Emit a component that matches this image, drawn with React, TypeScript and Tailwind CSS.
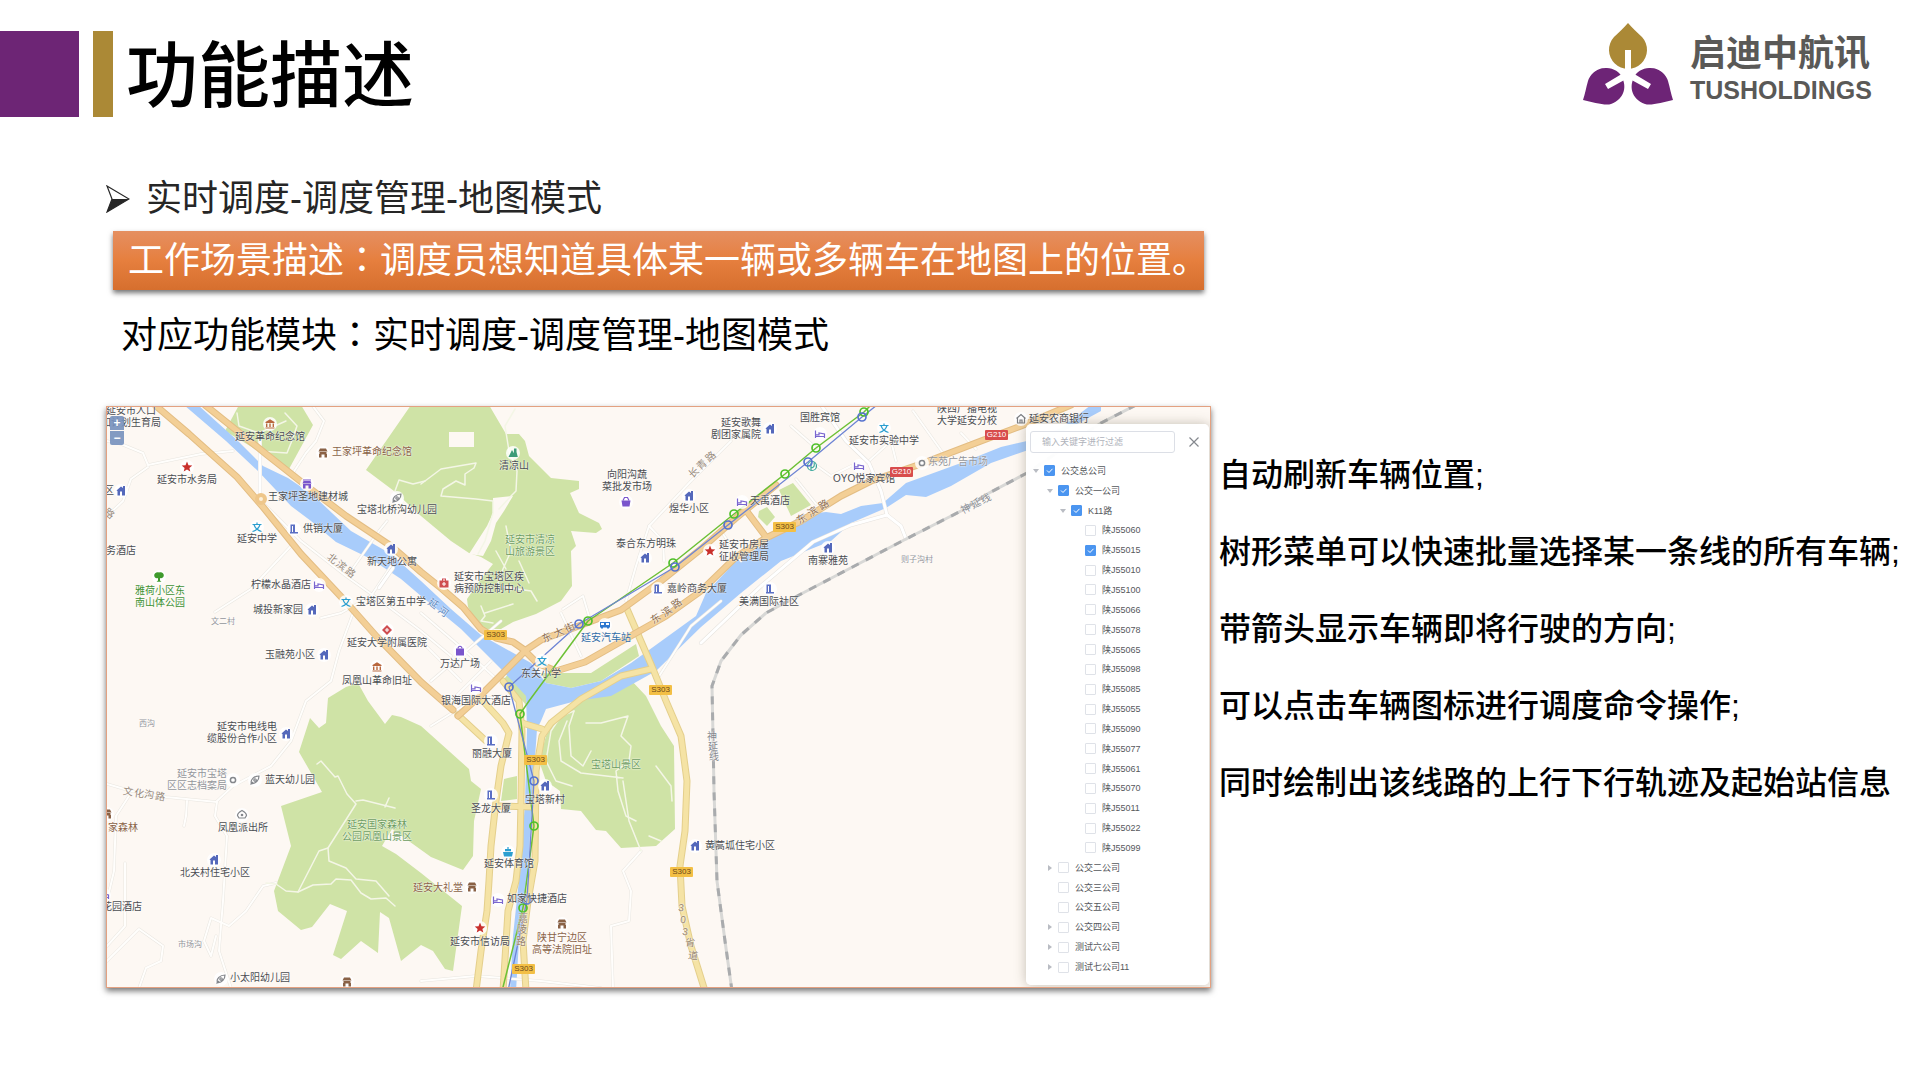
import React from "react";

type IconKind =
  | "house" | "building" | "bed" | "school" | "museum" | "hall" | "star" | "shop" | "rocket"
  | "tree" | "cross" | "mountain" | "medkit" | "bag" | "bus" | "basket" | "bank" | "dot"
  | "swirl" | "police" | "gym";

type Tone = "dark" | "brown" | "green" | "park" | "gray" | "blue";

type Label = { x: number; y: number; lines: string[]; tone?: Tone; small?: boolean; align?: "center" | "right" };

const ORIGIN_X = 106;
const ORIGIN_Y = 406;

const toneClass: Record<Tone, string> = {
  dark: "text-[#4a4c50]",
  brown: "text-[#8a6246]",
  green: "text-[#3f9133]",
  park: "text-[#6c9c5e]",
  gray: "text-[#93959a]",
  blue: "text-[#2e6ba6]",
};

/* x is the left edge of the label, y the middle of its first line */
const labels: Label[] = [
  { x: 100, y: 410, lines: ["延安市人口", "和计划生育局"], align: "center" },
  { x: 234, y: 436, lines: ["延安革命纪念馆"] },
  { x: 331, y: 451, lines: ["王家坪革命纪念馆"], tone: "brown" },
  { x: 156, y: 479, lines: ["延安市水务局"] },
  { x: 103, y: 490, lines: ["区"] },
  { x: 267, y: 496, lines: ["王家坪圣地建材城"] },
  { x: 356, y: 509, lines: ["宝塔北桥沟幼儿园"] },
  { x: 302, y: 528, lines: ["供销大厦"] },
  { x: 236, y: 538, lines: ["延安中学"] },
  { x: 105, y: 550, lines: ["务酒店"] },
  { x: 366, y: 561, lines: ["新天地公寓"] },
  { x: 134, y: 590, lines: ["雅荷小区东", "南山体公园"], tone: "green" },
  { x: 250, y: 584, lines: ["柠檬水晶酒店"] },
  { x: 355, y: 601, lines: ["宝塔区第五中学"] },
  { x: 252, y: 609, lines: ["城投新家园"] },
  { x: 210, y: 621, lines: ["文二村"], tone: "gray", small: true },
  { x: 346, y: 642, lines: ["延安大学附属医院"] },
  { x: 264, y: 654, lines: ["玉融苑小区"] },
  { x: 341, y: 680, lines: ["凤凰山革命旧址"] },
  { x: 498, y: 465, lines: ["清凉山"] },
  { x: 504, y: 539, lines: ["延安市清凉", "山旅游景区"], tone: "park" },
  { x: 453, y: 576, lines: ["延安市宝塔区疾", "病预防控制中心"] },
  { x: 439, y: 663, lines: ["万达广场"] },
  { x: 580, y: 637, lines: ["延安汽车站"], tone: "blue" },
  { x: 520, y: 673, lines: ["东关小学"] },
  { x: 440, y: 700, lines: ["银海国际大酒店"] },
  { x: 601, y: 474, lines: ["向阳沟蔬", "菜批发市场"], align: "center" },
  { x: 668, y: 508, lines: ["煜华小区"] },
  { x: 615, y: 543, lines: ["泰合东方明珠"] },
  { x: 718, y: 544, lines: ["延安市房屋", "征收管理局"] },
  { x: 666, y: 588, lines: ["嘉岭商务大厦"] },
  { x: 710, y: 422, lines: ["延安歌舞", "剧团家属院"], align: "right" },
  { x: 799, y: 417, lines: ["国胜宾馆"] },
  { x: 848, y: 440, lines: ["延安市实验中学"] },
  { x: 936, y: 408, lines: ["陕西广播电视", "大学延安分校"] },
  { x: 1028, y: 418, lines: ["延安农商银行"] },
  { x: 832, y: 478, lines: ["OYO悦家宾馆"] },
  { x: 927, y: 461, lines: ["东苑广告市场"], tone: "gray" },
  { x: 749, y: 500, lines: ["天禹酒店"] },
  { x: 807, y: 560, lines: ["南寨雅苑"] },
  { x: 900, y: 559, lines: ["则子沟村"], tone: "gray", small: true },
  { x: 738, y: 601, lines: ["美满国际社区"] },
  { x: 138, y: 723, lines: ["西沟"], tone: "gray", small: true },
  { x: 206, y: 726, lines: ["延安市电线电", "缆股份合作小区"], align: "right" },
  { x: 166, y: 773, lines: ["延安市宝塔", "区区志档案局"], tone: "gray", align: "right" },
  { x: 264, y: 779, lines: ["蓝天幼儿园"] },
  { x: 107, y: 827, lines: ["家森林"], tone: "brown" },
  { x: 217, y: 827, lines: ["凤凰派出所"] },
  { x: 179, y: 872, lines: ["北关村住宅小区"] },
  { x: 101, y: 906, lines: ["花园酒店"] },
  { x: 177, y: 944, lines: ["市场沟"], tone: "gray", small: true },
  { x: 229, y: 977, lines: ["小太阳幼儿园"] },
  { x: 341, y: 824, lines: ["延安国家森林", "公园凤凰山景区"], tone: "park", align: "center" },
  { x: 412, y: 887, lines: ["延安大礼堂"], tone: "brown" },
  { x: 471, y: 753, lines: ["丽融大厦"] },
  { x: 470, y: 808, lines: ["圣龙大厦"] },
  { x: 524, y: 799, lines: ["宝塔新村"] },
  { x: 590, y: 764, lines: ["宝塔山景区"], tone: "park" },
  { x: 483, y: 863, lines: ["延安体育馆"] },
  { x: 506, y: 898, lines: ["如家快捷酒店"] },
  { x: 449, y: 941, lines: ["延安市信访局"] },
  { x: 531, y: 937, lines: ["陕甘宁边区", "高等法院旧址"], tone: "brown", align: "center" },
  { x: 704, y: 845, lines: ["黄蒿坬住宅小区"] },
];

type RoadName = { chars: [string, number, number][]; angle: number; color: string };

const roadNames: RoadName[] = [
  { angle: 38, color: "#97897a", chars: [["北", 331, 558], ["滨", 340, 565], ["路", 349, 572]] },
  { angle: 36, color: "#5a86bd", chars: [["延", 432, 603], ["河", 442, 611]] },
  { angle: -25, color: "#8b6b4d", chars: [["东", 546, 637], ["大", 558, 632], ["街", 569, 627]] },
  { angle: -35, color: "#8b6b4d", chars: [["东", 655, 618], ["滨", 666, 611], ["路", 676, 603]] },
  { angle: -42, color: "#97897a", chars: [["长", 693, 472], ["青", 701, 464], ["路", 710, 456]] },
  { angle: -32, color: "#8b6b4d", chars: [["东", 801, 518], ["滨", 812, 511], ["路", 823, 504]] },
  { angle: -28, color: "#85888d", chars: [["神", 965, 508], ["延", 975, 503], ["线", 985, 498]] },
  { angle: 8, color: "#97897a", chars: [["文", 127, 791], ["化", 138, 793], ["沟", 148, 794], ["路", 159, 796]] },
  { angle: 0, color: "#97836a", chars: [["嘉", 522, 918], ["陵", 521, 929], ["路", 520, 941]] },
  { angle: 6, color: "#97836a", chars: [["3", 680, 907], ["0", 682, 919], ["3", 684, 931], ["省", 689, 942], ["道", 692, 955]] },
  { angle: 0, color: "#85888d", chars: [["神", 711, 736], ["延", 712, 746], ["线", 713, 756]] },
  { angle: 40, color: "#97897a", chars: [["路", 108, 513]] },
];

const badges: [string, number, number][] = [
  ["S303", 494, 634], ["S303", 659, 689], ["S303", 783, 526], ["S303", 534, 759],
  ["S303", 522, 968], ["S303", 680, 871], ["G210", 995, 434], ["G210", 900, 471],
];

const icons: [IconKind, number, number, string][] = [
  ["museum", 269, 423, "#b9683f"], ["hall", 322, 452, "#8a6246"], ["star", 186, 466, "#c9302c"],
  ["house", 120, 490, "#5468bb"], ["shop", 306, 483, "#7a55cc"], ["rocket", 396, 497, "#84878c"],
  ["building", 293, 528, "#5b6fc4"], ["school", 256, 526, "#2c9fd0"], ["house", 390, 548, "#5468bb"],
  ["tree", 158, 576, "#3f9a2c"], ["bed", 318, 584, "#7a66cf"], ["school", 345, 601, "#2c9fd0"],
  ["house", 311, 609, "#5468bb"], ["cross", 386, 629, "#cf4d50"], ["house", 323, 654, "#5468bb"],
  ["museum", 376, 666, "#b9683f"], ["mountain", 512, 452, "#3d9c78"], ["medkit", 443, 582, "#cf4d50"],
  ["bag", 459, 650, "#7a55cc"], ["bus", 604, 624, "#2f78cf"], ["school", 541, 660, "#2c9fd0"],
  ["bed", 475, 687, "#7a66cf"], ["basket", 625, 501, "#7a55cc"], ["house", 688, 495, "#5468bb"],
  ["house", 644, 557, "#5468bb"], ["star", 709, 550, "#c9302c"], ["building", 657, 588, "#5b6fc4"],
  ["house", 769, 428, "#5468bb"], ["bed", 819, 433, "#7a66cf"], ["school", 883, 427, "#2c9fd0"],
  ["bank", 1020, 418, "#7c7e82"], ["bed", 858, 465, "#7a66cf"], ["dot", 921, 462, "#84878c"],
  ["bed", 741, 501, "#7a66cf"], ["house", 827, 547, "#5468bb"],
  ["building", 769, 588, "#5b6fc4"], ["house", 285, 733, "#5468bb"], ["dot", 232, 779, "#84878c"],
  ["rocket", 254, 779, "#84878c"], ["hall", 106, 813, "#8a6246"], ["police", 241, 814, "#84878c"],
  ["house", 213, 859, "#5468bb"], ["bed", 103, 894, "#7a66cf"], ["rocket", 220, 978, "#84878c"],
  ["hall", 346, 981, "#8a6246"], ["hall", 471, 886, "#8a6246"], ["building", 490, 740, "#5b6fc4"],
  ["building", 490, 794, "#5b6fc4"], ["house", 544, 785, "#5468bb"], ["gym", 507, 851, "#2c9fd0"],
  ["bed", 497, 899, "#7a66cf"], ["star", 479, 927, "#c9302c"], ["hall", 561, 923, "#8a6246"],
  ["house", 694, 845, "#5468bb"],
];

function iconShape(kind: IconKind, c: string) {
  const line = { fill: "none", stroke: c, strokeWidth: 1.2 };
  switch (kind) {
    case "house":
      return <path d="M-4.500-.5 0-4.500 2-3V-5H4V4.500H1V.500H-1V4.500H-3.500V0Z" fill={c} />;
    case "building":
      return <path d="M-3.500-4.500H1V3H4V4.500H-4V3H-3.500ZM-2-3V3H-1V-3Z" fill={c} fillRule="evenodd" />;
    case "bed":
      return <path d="M-4.500-3.500V4M-4.500 2.500H4.500M4.500 4V0L-1-1V.800H-4.500" {...line} />;
    case "school":
      return <path d="M-4.500-2.500H4.500M0-4.500V-2.500M-3-2.500C-2 1 1 3.500 4.500 4.500M3-2.500C2 1-1 3.500-4.500 4.500" {...line} />;
    case "museum":
      return <path d="M0-4.800 4.500-2V-1H-4.500V-2ZM-4-.5H-2.600V3H-4ZM-.7-.5H.700V3H-.7ZM2.600-.5H4V3H2.600ZM-4.500 3.400H4.500V4.600H-4.500Z" fill={c} />;
    case "hall":
      return <path d="M-3-4.500H3L4.500-1.500H-4.500ZM-3.500-1H3.500V1H4V4.500H1.500V1.500H-1.500V4.500H-4V1H-3.500Z" fill={c} />;
    case "star":
      return <path d="M0-5.500 1.500-1.800 5.300-1.600 2.400.900 3.300 4.600 0 2.600-3.300 4.600-2.400.900-5.300-1.600-1.500-1.800Z" fill={c} />;
    case "shop":
      return <path d="M-4-4.500H4V-3.500H-4ZM-3.500-3H3.500L4.500-.5H-4.500ZM-4 0H4V4.500H1.500V1.500H-1.500V4.500H-4Z" fill={c} />;
    case "rocket":
      return <path d="M-3.500 3.500C-5 0-1-4 4-4 4 0 1 4-3.500 3.500ZM0-1.200A1.200 1.200 0 1 0 .1-1.200M-4.500 4.500-2 2" {...line} />;
    case "tree":
      return <path d="M-4.800-1.500C-5-4-2-5.500 0-4.500 2.500-5.500 5-4 4.800-1.500 4.500 1 2.500 1.500 1 1V3.500L2.500 4.800H-2.500L-1 3.500V1C-3 1.500-4.500 1-4.800-1.500Z" fill={c} />;
    case "cross":
      return <><path d="M0-5 5 0 0 5-5 0Z" fill={c} /><path d="M0-2V2M-2 0H2" stroke="#fff" strokeWidth="1.100" /></>;
    case "mountain":
      return <path d="M-4.500 4-1-3 .8.200 1-4.500H3.500V-1L4.800 4Z" fill={c} />;
    case "medkit":
      return <><path d="M-4.500-2.500H-2V-4.500H2V-2.500H4.500V4.500H-4.500ZM-1-2.500H1V-3.500H-1Z" fill={c} fillRule="evenodd" /><path d="M0-1V3M-2 1H2" stroke="#fff" strokeWidth="1.100" /></>;
    case "bag":
      return <><path d="M-4-2.500H4V4.500H-4Z" fill={c} /><path d="M-2-2.500C-2-5.500 2-5.500 2-2.500" {...line} /></>;
    case "bus":
      return <path d="M-5-3H5V2.500H4V3.500H2V2.500H-2V3.500H-4V2.500H-5ZM-4-2V0H-1V-2ZM1-2V0H4V-2Z" fill={c} fillRule="evenodd" />;
    case "basket":
      return <><path d="M-4.500-1.500H4.500L3.500 4.500H-3.500Z" fill={c} /><path d="M-3-1.500-1.500-4.500H1.500L3-1.500" {...line} /></>;
    case "bank":
      return <path d="M-4.500-.5 0-4.500 4.500-.5M-3.500-1V4H3.500V-1M-1 4V1H1V4" {...line} />;
    case "dot":
      return <circle r="2.600" fill="#fff" stroke={c} strokeWidth="1.500" />;
    case "swirl":
      return <><circle r="4.500" {...line} /><path d="M-1 4.500V-3M-1 2C2 2 3-1 2-3.500" {...line} /></>;
    case "police":
      return <><path d="M-4.500.5C-4.500-2 0-4.500 0-4.500S4.500-2 4.500.500L3 3H-3Z" {...line} /><circle r="1.300" fill={c} /></>;
    case "gym":
      return <path d="M-5 0H5L4 4.500H-4ZM-3-3H3V-.8H-3ZM-.6-5H.600V-3H-.6Z" fill={c} />;
  }
}

const minorRoads = [
  "M106 440 120 443 142 452 147 464 200 453 232 450",
  "M147 466 130 478 122 500 106 515",
  "M262 502 300 540 345 575 380 600 420 630 450 655",
  "M214 611 250 588 290 545",
  "M390 565 370 595 340 612 320 617",
  "M352 612 338 650 330 680 305 700 290 740 270 765 232 785 216 800",
  "M106 783 130 790 165 796 216 801 214 815 226 835 222 900 218 950 230 987",
  "M186 800 185 815 183 825",
  "M128 795 115 815 113 870 106 900",
  "M124 862V925L106 945",
  "M106 960 138 928 162 945 160 960 145 967 138 987",
  "M311 404 323 420 315 440 305 452 290 475",
  "M386 520 378 530 350 570",
  "M730 440 690 480 648 525 635 565 625 600",
  "M648 525 662 540 663 560",
  "M420 640 460 680M430 680 500 620M450 700 490 660M420 612 470 655 500 682",
  "M560 612 580 655M562 608 582 595 590 622",
  "M430 725 470 700 500 695",
  "M420 980 475 975 540 980 600 987",
  "M612 987 610 925 628 920 630 890 622 870 640 850",
  "M795 478 815 503M812 462 830 475 850 465",
  "M912 410 944 455M960 432 975 448",
  "M815 447 790 425M868 460 890 440 895 460",
  "M655 680 690 625 720 600",
  "M735 520 720 530 740 560",
  "M275 882 262 885 245 910 228 925 210 917 203 940 210 955 215 935",
];

const broadRoads = [
  "M820 404 845 440 868 462 880 490 886 514",
  "M259 440V492",
  "M392 567 378 587",
  "M886 514 850 524 812 541 760 585 700 642",
  "M886 514 900 525 905 538",
];

const parkPaths = [
  "M236 412 238 425 258 432 257 450 286 452 290 442 296 425 284 412M258 432 285 420",
  "M514 408 504 425 508 450 516 470 515 490 510 495 498 508",
  "M420 483 440 468 475 462 473 467 464 473V484L455 480 442 488 440 495 475 498 492 500 492 512 484 540 477 553",
  "M505 525 510 550 502 568 496 585 530 590 536 600M495 550 505 568M518 560 528 582",
  "M480 605 484 615 480 620 492 622M484 612 512 603",
  "M394 490 398 479 412 483 424 480",
  "M316 763 320 760 334 776 337 775 346 793 355 803 327 847 318 850 297 891 285 890 275 883 265 882M355 800 362 799 394 807M384 806 388 797",
  "M297 891 312 884 330 883 335 878 350 879 360 892 370 898 385 897 394 905M327 847 328 860 345 867 355 878 375 880 388 895",
  "M573 710 560 715 550 730 545 760 555 780 571 785M566 720 558 740 560 760 580 772 622 777M585 722 600 722 627 715 620 735 630 745 628 760 615 770 617 790 625 815 635 820",
  "M573 710 568 725 570 755 582 765 590 750M655 765 670 785 671 800M648 835 660 840",
  "M622 780 628 820 640 850",
];

const orangeRoads = [
  "M154 404 188 433 236 476 262 506 300 553 345 601 376 636 420 681 452 709",
  "M204 404 265 453 303 483 345 515 390 545 420 571 440 587 462 606 480 628 495 637 512 641 525 650",
  "M457 715 478 696 525 649 540 639 575 626 620 609 660 580 700 548 735 517 775 484",
  "M525 651 536 662 555 670 584 661 635 632 665 615 700 590 735 556 765 537 800 520 840 495 870 480 920 463 980 440 1020 425 1070 404",
  "M744 508 765 536",
];

const yellowRoads = [
  "M626 608 652 668 665 700 680 735 686 780 684 830 679 865 681 905 690 945 704 990",
  "M650 668 620 675 580 698 550 722 541 735 535 770 534 860 527 900 522 940 525 990",
  "M502 680 518 700 521 730 520 800 519 845 515 880 507 910 502 990",
  "M482 700 502 722 508 732 500 765 495 800 490 845 488 880 486 910 480 950 475 990",
  "M457 714 485 740",
  "M521 722 541 728",
  "M496 805 532 806",
];

const railway =
  "M1135 404 1100 422 1026 472 988 492 960 510 905 538 800 593 765 612 740 634 720 660 711 685 712 735 713 790 716 880 724 940 731 990";

const upTrack: [number, number][] = [[863, 411], [815, 447], [784, 473], [733, 513], [672, 562], [587, 620], [519, 713], [533, 825], [522, 907]];
const downTrack: [number, number][] = [[861, 416], [807, 461], [727, 524], [674, 566], [578, 623], [508, 686], [533, 780], [526, 899]];

function MapCanvas() {
  return (
    <svg className="absolute inset-0 h-full w-full" role="img" aria-label="延安市地图">
      <g transform="translate(-106 -406)">
        <g fill="#cfe3a6">
          <path d="M238 404 224 430 288 468 312 424 300 404Z" />
          <path d="M410 404 365 469 393 490 420 515 450 540 468 552 480 556 492 563 480 578 466 598 467 606 480 628 500 628 512 621 535 613 560 600 571 585 570 550 575 545 570 530 595 532 601 528 598 522 578 512 569 492 578 488 578 480 550 477 528 455 524 440 518 433 505 433 488 404Z" />
          <path d="M327 697 345 686 357 682 367 700 384 723 391 714 400 716 420 725 468 768 470 780 480 788 473 820 472 855 462 869 430 856 391 828 381 845 395 853 420 872 461 905 460 912 452 970 444 968 432 950 420 944 400 960 388 917 379 911 377 952 360 940 340 958 332 954 346 910 329 903 311 926 300 929 277 910 273 890 290 845 280 805 321 791 298 751 309 717 318 727 325 722Z" />
          <path d="M503 678 525 704 525 690 508 672Z" />
          <path d="M540 672 590 672 635 643 638 655 600 680 570 687 545 682Z" />
          <path d="M545 735 560 712 590 694 628 677 645 695 660 725 673 745 674 828 655 845 620 847 605 830 595 829 580 810 560 808 559 790 545 780 538 760Z" />
          <path d="M503 778 516 775 516 798 500 800Z" />
          <path d="M778 489 792 482 810 504 790 515Z" />
          <path d="M758 510 766 506 774 516 766 525 757 516Z" />
        </g>
        <path d="M492 497 512 495 503 510 495 522 490 540 482 555 468 553 486 525 492 512Z" fill="#fdf8f3" />
        <rect x="448" y="431" width="25" height="15" fill="#fdf8f3" />
        <path
          fill="#a8ccfb"
          d="M183 404 225 440 257 470 290 505 310 520 335 541 370 558 400 578 420 595 460 628 500 668 525 695 526 728 524 800 520 860 512 935 509 990 515 990 518 940 527 870 531 800 536 728 540 720 545 708 575 700 610 695 655 670 700 626 740 592 780 560 830 540 850 522 885 507 905 494 925 496 950 485 990 462 1030 448 1100 410 1100 404 1090 404 1060 427 1026 440 1000 446 960 462 905 482 882 502 860 505 840 513 825 511 800 514 765 542 735 560 705 592 695 615 630 662 600 680 570 687 545 682 530 662 505 648 480 634 450 608 420 580 390 553 350 530 312 494 287 477 262 465 237 440 197 404Z"
        />
        <g fill="none" strokeLinejoin="round" strokeLinecap="round">
          {minorRoads.map((d) => <path key={d} d={d} stroke="#e9e6e0" strokeWidth="3" />)}
          {minorRoads.map((d) => <path key={d} d={d} stroke="#fffefc" strokeWidth="2" />)}
          {broadRoads.map((d) => <path key={d} d={d} stroke="#e6e3de" strokeWidth="4" />)}
          {broadRoads.map((d) => <path key={d} d={d} stroke="#fff" strokeWidth="3" />)}
          {parkPaths.map((d) => <path key={d} d={d} stroke="#f4f6e6" strokeWidth="1.500" />)}
          {yellowRoads.map((d) => <path key={d} d={d} stroke="#e4cf8c" strokeWidth="7" />)}
          {yellowRoads.map((d) => <path key={d} d={d} stroke="#f5e3a5" strokeWidth="5" />)}
          {orangeRoads.map((d) => <path key={d} d={d} stroke="#e3bd83" strokeWidth="7" />)}
          {orangeRoads.map((d) => <path key={d} d={d} stroke="#f3cf96" strokeWidth="5" />)}
          <circle cx="260" cy="498" r="4" fill="#fdf0d8" stroke="#eec68a" strokeWidth="4" />
        </g>
        <g fill="none" strokeLinejoin="round">
          <path d={railway} stroke="#d8d8d6" strokeWidth="3" />
          <path d={railway} stroke="#a9abad" strokeWidth="3" strokeDasharray="8 8" />
          <path d="M870 404 863 411 815 447 784 473 733 513 672 562 587 620 528 700 519 713 533 825 522 907 501 990" stroke="#6cc035" strokeWidth="1.500" />
          <path d="M876 404 861 416 807 461 727 524 674 566 578 623 508 686 533 780 526 899 507 990" stroke="#6d84d4" strokeWidth="1.300" />
        </g>
        {icons.map(([kind, x, y, color]) => (
          <g key={`${kind}-${x}-${y}`} transform={`translate(${x} ${y})`}>
            <circle r="7" fill="#fff" fillOpacity="0.850" />
            {iconShape(kind, color)}
          </g>
        ))}
        <g transform="translate(811 465)">{iconShape("swirl", "#3aa79b")}</g>
        <g fill="none" strokeWidth="1.700">
          {upTrack.map(([x, y]) => <circle key={`${x}-${y}`} cx={x} cy={y} r="4" stroke="#4fc02a" />)}
          {downTrack.map(([x, y]) => <circle key={`${x}-${y}`} cx={x} cy={y} r="4" stroke="#5673cf" />)}
        </g>
      </g>
    </svg>
  );
}

function MapLabels() {
  return (
    <div className="absolute inset-0">
      {labels.map((l) => (
        <div
          key={`${l.x}-${l.y}`}
          className={[
            "absolute whitespace-nowrap leading-3 [text-shadow:0_0_1px_#fff,0_0_2px_#fff]",
            toneClass[l.tone ?? "dark"],
            l.small ? "text-[8px]" : "text-[10px]",
            l.align === "center" ? "text-center" : l.align === "right" ? "text-right" : "text-left",
          ].join(" ")}
          style={{ left: l.x - ORIGIN_X, top: l.y - ORIGIN_Y - 6 }}
        >
          {l.lines.map((t) => <div key={t}>{t}</div>)}
        </div>
      ))}
      {roadNames.map((r, i) =>
        r.chars.map(([c, x, y], j) => (
          <span
            key={`${i}-${j}`}
            className="absolute w-3 text-center text-[10px] leading-3 [text-shadow:0_0_1px_#fff,0_0_2px_#fff]"
            style={{ left: x - ORIGIN_X - 6, top: y - ORIGIN_Y - 6, color: r.color, transform: `rotate(${r.angle}deg)` }}
          >
            {c}
          </span>
        )),
      )}
      {badges.map(([t, x, y]) => (
        <span
          key={`${x}-${y}`}
          className={
            t === "G210"
              ? "absolute h-[10px] w-[23px] rounded-[1px] bg-[#d84c4c] text-center text-[8px] leading-[10px] text-white"
              : "absolute h-[10px] w-[23px] rounded-[1px] bg-[#f3bf45] text-center text-[8px] leading-[10px] text-[#6b4a1c]"
          }
          style={{ left: x - ORIGIN_X - 11, top: y - ORIGIN_Y - 5 }}
        >
          {t}
        </span>
      ))}
    </div>
  );
}

type Node = { id: string; label: string; level: number; checked?: boolean; arrow?: "open" | "closed" };

const plates = ["55060", "55015", "55010", "55100", "55066", "55078", "55065", "55098", "55085", "55055", "55090", "55077", "55061", "55070", "55011", "55022", "55099"];

const nodes: Node[] = [
  { id: "root", label: "公交总公司", level: 0, checked: true, arrow: "open" },
  { id: "c1", label: "公交一公司", level: 1, checked: true, arrow: "open" },
  { id: "k11", label: "K11路", level: 2, checked: true, arrow: "open" },
  ...plates.map((p) => ({ id: p, label: `陕J${p}`, level: 3, checked: p === "55015" })),
  { id: "c2", label: "公交二公司", level: 1, arrow: "closed" },
  { id: "c3", label: "公交三公司", level: 1 },
  { id: "c5", label: "公交五公司", level: 1 },
  { id: "c4", label: "公交四公司", level: 1, arrow: "closed" },
  { id: "t6", label: "测试六公司", level: 1, arrow: "closed" },
  { id: "t7", label: "测试七公司11", level: 1, arrow: "closed" },
];

const indent = ["pl-[6px]", "pl-[20px]", "pl-[33px]", "pl-[47px]"];

function TreeRow({ node }: { node: Node }) {
  return (
    <li className={`flex flex-1 items-center ${indent[node.level]}`}>
      <span className="flex w-[12px] shrink-0">
        {node.arrow && (
          <button type="button" aria-label={`展开 ${node.label}`} className="flex">
            <svg viewBox="0 0 8 8" className="h-2 w-2" fill="#b9bcc3">
              {node.arrow === "open" ? <path d="M1 2H7L4 6Z" /> : <path d="M2 1V7L6 4Z" />}
            </svg>
          </button>
        )}
      </span>
      <label className="flex items-center gap-[6px] text-[9px] leading-3 text-[#55585c]">
        <span className="relative flex h-[11px] w-[11px] shrink-0">
          <input
            type="checkbox"
            defaultChecked={node.checked}
            className="peer h-full w-full appearance-none rounded-[1px] border border-[#dfe2e8] bg-white checked:border-[#4b95f0] checked:bg-[#4b95f0]"
          />
          <svg viewBox="0 0 11 11" className="pointer-events-none absolute inset-0 hidden peer-checked:block" fill="none" stroke="#fff">
            <path d="M3 5.500 5 7.500 8.500 3.800" />
          </svg>
        </span>
        {node.label}
      </label>
    </li>
  );
}

function TreePanel() {
  return (
    <aside className="relative mt-[17px] mr-[1px] mb-[2px] ml-auto w-[183px] rounded-[5px] bg-white/97 pt-[7px] pb-[8px] shadow-[0_0_12px_rgba(90,80,60,0.35)]">
      <div className="flex items-center pl-1">
        <input
          type="text"
          aria-label="输入关键字进行过滤"
          placeholder="输入关键字进行过滤"
          className="h-[22px] w-[145px] rounded-[3px] border border-[#dcdfe6] bg-white/80 px-[11px] text-[9px] text-[#606266] placeholder:text-[#b0b3bb]"
        />
        <button type="button" aria-label="关闭" className="ml-[14px]">
          <svg viewBox="0 0 10 10" className="h-[10px] w-[10px]" fill="none" stroke="#85888e" strokeWidth="1.200">
            <path d="M.5.500 9.500 9.500M9.500.500.5 9.500" />
          </svg>
        </button>
      </div>
      <ul className="mt-[8px] flex h-[516px] flex-col">
        {nodes.map((n) => <TreeRow key={n.id} node={n} />)}
      </ul>
    </aside>
  );
}

function Logo() {
  return (
    <div className="flex items-center">
      <svg viewBox="0 0 90 84" className="h-[84px] w-[90px]" aria-hidden="true">
        <path d="M45 0C49 5 54 9 59 14A19 19 0 1 1 31 14C36 9 41 5 45 0Z" fill="#ab8936" />
        <path d="M0 77C2 71 3 65 5 58A19 19 0 0 1 37 51C45 62 42 76 28 81C22 83 10 79 0 77Z" fill="#6d2476" />
        <path d="M90 77C88 71 87 65 85 58A19 19 0 0 0 53 51C45 62 48 76 62 81C68 83 80 79 90 77Z" fill="#6d2476" />
        <path d="M42 27H48V49L68 61 65 66 45 55 25 66 22 61 42 49Z" fill="#fff" />
      </svg>
      <div className="ml-[17px] pt-[10px] text-[#5a5957]">
        <div className="text-[36px] leading-[40px] font-bold">启迪中航讯</div>
        <div className="font-['Liberation_Sans'] text-[25px] leading-[32px] font-bold">TUSHOLDINGS</div>
      </div>
    </div>
  );
}

const features = [
  "自动刷新车辆位置;",
  "树形菜单可以快速批量选择某一条线的所有车辆;",
  "带箭头显示车辆即将行驶的方向;",
  "可以点击车辆图标进行调度命令操作;",
  "同时绘制出该线路的上行下行轨迹及起始站信息",
];

function Colon() {
  return <span className="font-['Noto_Sans_CJK_TC'] leading-none">：</span>;
}

export default function App() {
  return (
    <div className="min-h-screen bg-white font-['Liberation_Sans','Noto_Sans_CJK_SC',sans-serif] text-black">
      <header className="flex items-start justify-between pr-[48px]">
        <div className="flex items-center pt-[31px]">
          <div className="h-[86px] w-[79px] bg-[#6d2575]" />
          <div className="ml-[14px] h-[86px] w-[20px] bg-[#ab8936]" />
          <h1 className="ml-[13px] pt-1 text-[72px] leading-[82px] font-medium">功能描述</h1>
        </div>
        <div className="pt-[23px]">
          <Logo />
        </div>
      </header>

      <main className="grid grid-cols-[minmax(0,1fr)_709px] pt-[58px] pl-[106px]">
        <div className="pb-[46px]">
          <h2 className="flex items-center gap-[16px] text-[36px] leading-[48px] text-[#262626]">
            <svg viewBox="0 0 24 28" className="h-7 w-6" aria-hidden="true">
              <path d="M1 1 23 14 1 27 6 14Z" fill="#fff" stroke="#262626" strokeWidth="1.200" />
              <path d="M1 27 6 14H23Z" fill="#262626" />
            </svg>
            实时调度-调度管理-地图模式
          </h2>
          <p className="mx-[7px] mt-2 bg-linear-to-b from-[#e58f60] via-[#e67f3e] to-[#d66f2e] pl-[15px] text-[36px] leading-[59px] whitespace-nowrap text-white shadow-[0_3px_5px_rgba(0,0,0,0.55)]">
            工作场景描述<Colon />调度员想知道具体某一辆或多辆车在地图上的位置。
          </p>
          <p className="mt-[22px] pl-[15px] text-[36px] leading-[48px]">
            对应功能模块<Colon />实时调度-调度管理-地图模式
          </p>
        </div>

        <section className="relative col-start-1 overflow-hidden border border-[#e3a181] bg-[#fdf8f3] shadow-[0_3px_6px_rgba(0,0,0,0.55)]">
          <MapCanvas />
          <MapLabels />
          <div className="absolute top-[9px] left-[3px] flex flex-col gap-px">
            <button type="button" aria-label="放大" className="h-[14px] w-[14px] rounded-t-[2px] bg-[#7590bd]/90 text-[12px] leading-[14px] font-bold text-white">+</button>
            <button type="button" aria-label="缩小" className="h-[14px] w-[14px] rounded-b-[2px] bg-[#7590bd]/90 text-[12px] leading-[14px] font-bold text-white">−</button>
          </div>
          <TreePanel />
        </section>

        <ul className="col-start-2 pt-[31px] pl-[8px] text-[32px] leading-[77px] font-medium whitespace-nowrap">
          {features.map((f) => <li key={f}>{f}</li>)}
        </ul>
      </main>
    </div>
  );
}
